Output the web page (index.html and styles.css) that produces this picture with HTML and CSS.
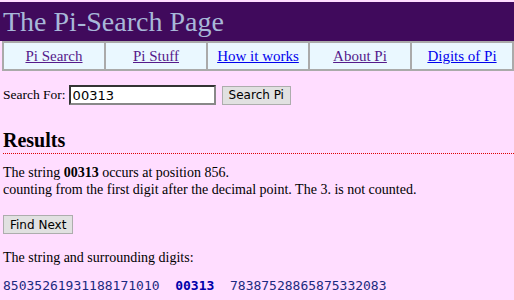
FILE: index.html
```html
<!DOCTYPE html>
<html lang="en">
<head>
    <meta charset="UTF-8">
    <title>The Pi-Search Page</title>
    <link rel="stylesheet" href="styles.css">
</head>
<body>
<div class="banner">The Pi-Search Page</div>
<table class="nav">
    <tr>
        <td><a href="#" class="visited">Pi Search</a></td>
        <td><a href="#" class="visited">Pi Stuff</a></td>
        <td><a href="#">How it works</a></td>
        <td><a href="#" class="visited">About Pi</a></td>
        <td><a href="#">Digits of Pi</a></td>
    </tr>
</table>
<div class="content">
    <form class="search-form">
        <label for="q" class="search-label">Search For:</label>
        <input type="text" id="q" class="search-input" value="00313">
        <button type="button" class="btn">Search Pi</button>
    </form>
    <h2 class="results">Results</h2>
    <p class="found">The string <b>00313</b> occurs at position 856.<br>
    counting from the first digit after the decimal point. The 3. is not counted.</p>
    <button type="button" class="btn">Find Next</button>
    <p class="surround">The string and surrounding digits:</p>
    <pre class="digits">85035261931188171010  <b>00313</b>  78387528865875332083</pre>
</div>
</body>
</html>
```

FILE: styles.css
```css
body { margin: 0; padding-top: 2px; background: #ffddff; font-family: "Liberation Serif", "Times New Roman", serif; font-size: 14px; color: #000; }
.banner { background: #400a5c; color: #a8b8d8; font-size: 28px; line-height: 39px; padding-left: 3px; }
.nav { width: calc(100% - 2px); margin-left: 2px; border-collapse: collapse; background: #eaf8ff; }
.nav td { border: 2px solid #aaaaaa; text-align: center; padding: 0; height: 26px; width: 20%; font-size: 15px; }
.nav a { color: #0000ee; }
.nav a.visited { color: #551a8b; }
.content { padding: 0 0 0 3px; }
.search-form { margin: 14px 0 0; display: flex; align-items: center; gap: 3px; }
.search-label { font-size: 13.5px; }
.search-input { width: 139px; height: 14px; padding: 1px 2px; border: 2px inset #888; font-family: "DejaVu Sans", sans-serif; font-size: 13px; }
.btn { font-family: "DejaVu Sans", Tahoma, sans-serif; font-size: 12px; background: #e1e1e1; border: 1px solid #adadad; padding: 1px 6px; height: 19px; color: #000; }
.search-form .btn { margin-left: 3px; }
.results { font-size: 20px; margin: 24px 0 0; padding-bottom: 1px; border-bottom: 1px dotted #dd0000; }
.found { margin: 10px 0 17px; line-height: 17px; }
.surround { margin: 15px 0 12px; line-height: 17px; }
.digits { font-family: "DejaVu Sans Mono", monospace; font-size: 13px; color: #1c2a80; margin: 0; }
.digits b { color: #0000aa; }
```
